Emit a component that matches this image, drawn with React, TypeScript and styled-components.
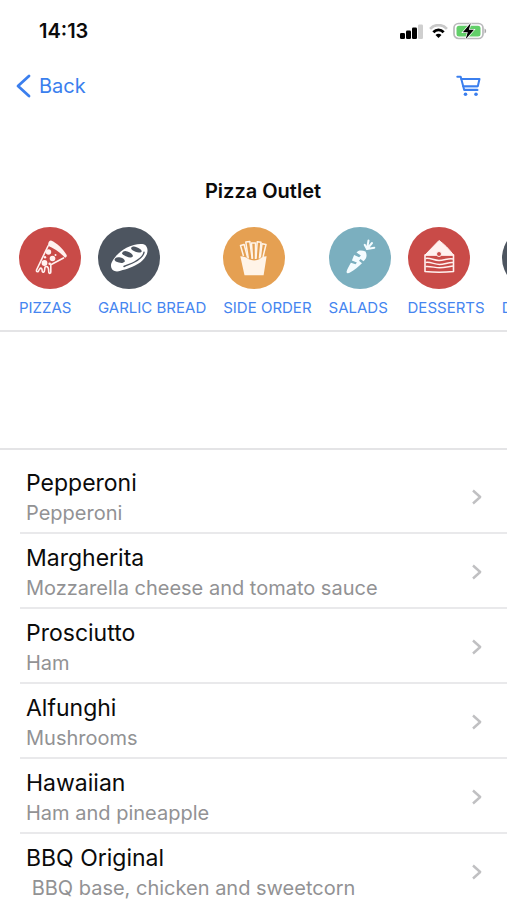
import React from "react";
import styled, { createGlobalStyle } from "styled-components";

const GlobalStyle = createGlobalStyle`
  *, *::before, *::after { box-sizing: border-box; }
  body {
    margin: 0;
    background: #fff;
    color: #0b0b0b;
    font-family: Inter, "Liberation Sans", sans-serif;
  }
`;

const Screen = styled.div`
  display: flex;
  flex-direction: column;
  height: 100vh;
  overflow: hidden;
  background: #fff;
`;

const StatusBar = styled.div`
  display: flex;
  justify-content: space-between;
  align-items: center;
  flex: none;
  height: 62px;
  padding: 0 20px 0 39px;
`;

const Clock = styled.time`
  font-size: 20px;
  line-height: 24px;
  font-weight: 600;
`;

const StatusIcons = styled.div`
  display: flex;
  align-items: center;
  gap: 5px;
  svg { display: block; }
`;

const NavBar = styled.nav`
  display: flex;
  justify-content: space-between;
  align-items: center;
  flex: none;
  height: 48px;
  padding: 0 25px 0 15px;
`;

const NavButton = styled.button`
  display: flex;
  align-items: center;
  gap: 8px;
  padding: 0;
  border: 0;
  background: none;
  color: #3b7fee;
  font: inherit;
  font-size: 20px;
  line-height: 24px;
  cursor: pointer;
  svg { display: block; }
`;

const Header = styled.header`
  flex: none;
  padding-top: 69px;
  border-bottom: 2px solid #e4e4e6;
`;

const Title = styled.h1`
  margin: 0;
  padding-left: 19px;
  text-align: center;
  font-size: 20px;
  line-height: 24px;
  font-weight: 600;
`;

const Categories = styled.div`
  display: flex;
  gap: 17px;
  padding: 24px 19px 12px;
  overflow-x: auto;
  scrollbar-width: none;
`;

const Category = styled.button`
  display: flex;
  flex-direction: column;
  align-items: flex-start;
  flex: none;
  gap: 9px;
  padding: 0;
  border: 0;
  background: none;
  color: #4585f0;
  font: inherit;
  font-size: 15px;
  line-height: 20px;
  white-space: nowrap;
  cursor: pointer;
`;

const Disc = styled.span<{ $color: string }>`
  display: block;
  width: 62px;
  height: 62px;
  border-radius: 50%;
  background: ${({ $color }) => $color};
  svg { display: block; width: 62px; height: 62px; }
`;

const Menu = styled.ul`
  flex: 1;
  min-height: 0;
  margin: 116px 0 0;
  padding: 9px 0 0;
  border-top: 2px solid #e4e4e6;
  list-style: none;
  overflow-y: auto;
  scrollbar-width: none;
`;

const MenuItem = styled.li`
  margin-left: 20px;
  border-bottom: 2px solid #e9e9eb;
`;

const ItemButton = styled.button`
  display: flex;
  align-items: center;
  justify-content: space-between;
  width: 100%;
  padding: 8px 24px 5px 6px;
  border: 0;
  background: none;
  color: inherit;
  font: inherit;
  text-align: left;
  cursor: pointer;
  svg { display: block; flex: none; }
`;

const ItemText = styled.span`
  display: flex;
  flex-direction: column;
`;

const ItemName = styled.span`
  font-size: 23px;
  line-height: 32px;
`;

const ItemDetail = styled.span`
  color: #929294;
  font-size: 20px;
  line-height: 28px;
  white-space: pre;
`;

const Signal = () => (
  <svg width="24" height="15" viewBox="0 0 24 15" aria-hidden="true">
    <rect x="0" y="9" width="5" height="6" rx="1.3" />
    <rect x="6" y="6.500" width="5" height="8.500" rx="1.3" />
    <rect x="12" y="3.500" width="5" height="11.500" rx="1.3" />
    <rect x="18" y="0.500" width="5" height="14.500" rx="1.3" fill="#cfcfcf" />
  </svg>
);

const Wifi = () => (
  <svg width="19" height="15" viewBox="0 0 20 16" fill="none" aria-hidden="true">
    <path d="M1 5.200C6-.2 14-.2 19 5.200" stroke="#c9c9c9" strokeWidth="2.800" />
    <path d="M4.500 8.800c3.200-3.300 7.800-3.300 11 0" stroke="#000" strokeWidth="3" />
    <path d="M6.800 11.800c2-1.700 4.400-1.700 6.400 0L10 15z" fill="#000" />
  </svg>
);

const Battery = () => (
  <svg width="34" height="18" viewBox="0 0 34 18" fill="none" aria-hidden="true">
    <rect x="1" y="1.500" width="29" height="15" rx="4.500" stroke="#b9b9bb" strokeWidth="1.700" />
    <rect x="3.500" y="3.700" width="24" height="10.800" rx="2.500" fill="#62cf69" />
    <path d="M31.500 6.500c2.200.8 2.200 4.200 0 5z" fill="#a9a9ab" />
    <path d="M17.800 1 9.800 10.300h5l-2.200 6.900 8.400-9.400h-5.100z" fill="#000" stroke="#fff" strokeWidth="1.400" paintOrder="stroke" />
  </svg>
);

const BackChevron = () => (
  <svg width="16" height="24" viewBox="0 0 16 24" fill="none" stroke="currentColor" strokeWidth="2.800" strokeLinecap="round" strokeLinejoin="round" aria-hidden="true">
    <path d="M14 2 3 12 14 22" />
  </svg>
);

const Cart = () => (
  <svg width="26" height="22" viewBox="0 0 26 22" fill="none" stroke="currentColor" strokeWidth="2" strokeLinecap="round" strokeLinejoin="round" aria-hidden="true">
    <path d="M7 11.300h14.800L21.500 15H8z" fill="#cfe2ff" stroke="none" />
    <path d="M1.300 1.700H4.700L8.200 15H21.500" />
    <path d="M5.300 4H23.500l-1.700 7.300H7.200" />
    <circle cx="9.500" cy="19.300" r="1.800" fill="currentColor" stroke="none" />
    <circle cx="20" cy="19.300" r="1.800" fill="currentColor" stroke="none" />
  </svg>
);

const Disclosure = () => (
  <svg width="12" height="16" viewBox="0 0 12 16" fill="none" stroke="#c0c0c2" strokeWidth="2.400" strokeLinejoin="round" aria-hidden="true">
    <path d="M2 1.500 9.200 8 2 14.500" />
  </svg>
);

const PizzaIcon = () => (
  <svg viewBox="0 0 62 62" fill="none" aria-hidden="true">
    <path d="M32 13.500c6 2.600 11.800 8 15.500 14.200.8 1.400-.2 2.700-1.500 3-5.200-5.700-10.700-9.300-17-12 .1-2.800 1-5.500 3-5.200z" fill="#fff1ef" />
    <path d="M29.300 18.500 17.500 43c-.3 2.200 1.700 2.300 2.300.4l1.500-2.300c1.500-.2 1.800 1.300 1.900 3.100.6 1.800 2.300 1 2.300-.7l.5-3.300c1.800-1.600 3.300-.2 3.500 1.800l.3 3.500c.4 1.300 2 1 2-.5v-7.300L45 30.800" stroke="#fff1ef" strokeWidth="1.600" strokeLinejoin="round" />
    <circle cx="29.500" cy="25" r="2.700" fill="#fff1ef" />
    <circle cx="33.500" cy="31.500" r="2.800" fill="#fff1ef" />
    <circle cx="25.500" cy="36" r="2.900" fill="#fff1ef" />
    <circle cx="26" cy="30.300" r="1.200" fill="#fff1ef" />
    <circle cx="30.700" cy="36.700" r="1.300" fill="#fff1ef" />
    <circle cx="36.500" cy="28" r="1" fill="#fff1ef" />
  </svg>
);

const BreadIcon = () => (
  <svg viewBox="0 0 62 62" fill="none" aria-hidden="true">
    <path d="M13 38.500c0-4.500 7-13.500 15.500-17.800 7-3.700 16.500-5 19-2.500 4 4.200 2 11.500-5 17-7.500 5.500-14 6.500-20 8.600-5 1.600-9.500 0-9.500-5.300z" fill="#fff" />
    <g fill="#4d5560">
      <path d="M16.500 32.500c1-2 2.500-2.700 5-2.200 2.800.4 5 1.600 5.500 4-1.500 2-3.800 2.100-6.200 1.300-2-.6-4.400-1.600-4.300-3.100z" />
      <path d="M24 26.200c1.200-2.200 3-2.600 5.500-1.600 2.600.9 5.300 2.400 5.500 4.700-1.500 1.900-4.300 1.400-6.400.2-2-1-4.700-1.800-4.600-3.300z" />
      <path d="M33 21c1.500-1.700 3.400-1.700 5.600-.8 2.500 1 5 2.200 5.200 4.200-1.500 1.800-4.300 1.300-6.300.4-2-.9-4.500-2.200-4.500-3.800z" />
    </g>
    <path d="M46 25.300c-.7 3.800-4.500 7-9.500 9.700-3.500 2-7 2.800-10.500 4.500" stroke="#4d5560" strokeWidth="1.400" strokeLinecap="round" />
  </svg>
);

const FriesIcon = () => (
  <svg viewBox="0 0 62 62" fill="none" aria-hidden="true">
    <g stroke="#fff4e8" strokeWidth="1.500" strokeLinejoin="round">
      <path d="m20.500 29-3-10.500 3.600-1 3.500 13" />
      <path d="M25.300 31.500 22.800 15l4-.6 2.400 17.400" />
      <path d="M29.500 31.800 28.500 16h4v16" />
      <path d="M33 31.800 34.200 14.800l3.800.4-1.600 16.300" />
      <path d="m37.300 30.500 1.700-13.800 4 .8-3 12.500" />
    </g>
    <path d="M17.300 29.300c3.400.2 6 .6 8 2.700 3.500 1.900 8.500 1.900 11.500 0 1.800-2 3.500-2.600 6.800-2.700l-3 19H21.500z" fill="#fff4e8" />
  </svg>
);

const CarrotIcon = () => (
  <svg viewBox="0 0 62 62" fill="none" aria-hidden="true">
    <path d="M36.500 24.500c-3.300-1.600-7.500-1.600-9 1l4.400 3-1.800 1.800-5-2.300-2.200 5.500 5 2-1.300 1.700-4.700-1.500c-1.900 3.500-4 6.500-4.400 9.300.3 1.800 2.200 1.500 3.500.6 4.500-2.600 8.500-5.700 12-9.300l-3-2.600 1.500-1.600 3 2.200c2.500-2.300 4.300-5.200 2-9.800z" fill="#f4fcff" />
    <path d="m38 22-2.300-4.200M38 22l1.500-8.500M38 22l7.300-1.300M38 22l5-6" stroke="#f4fcff" strokeWidth="2" strokeLinecap="round" />
  </svg>
);

const CakeIcon = () => (
  <svg viewBox="0 0 62 62" fill="none" aria-hidden="true">
    <path d="M17 28 31 13.500c5 3.500 10 8.500 14.500 14.500z" fill="#fff1ef" stroke="#fff1ef" strokeLinejoin="round" />
    <path d="M17 28v16.500c9 .9 19.500.9 28.500 0V28z" stroke="#fff1ef" strokeWidth="1.600" strokeLinejoin="round" />
    <path d="M17.500 31.500c5-1 8 2 13.500 2s9-2.500 14-1.500M17.500 35.500c5-1 9 2 14 2s9-2.500 13.500-2M17.500 39.500c6-.5 9 1.300 14 1.300s9.500-1.300 14-1.800" stroke="#fff1ef" strokeWidth="1.500" />
    <circle cx="31" cy="27" r="2.500" fill="#c94b48" stroke="#fff1ef" />
  </svg>
);

const DrinkIcon = () => (
  <svg viewBox="0 0 62 62" fill="none" stroke="#fff" strokeWidth="2" strokeLinejoin="round" aria-hidden="true">
    <path d="M22 22h19l-3 26H25zM31 22l2-9h6" />
  </svg>
);

const categories = [
  { label: "PIZZAS", color: "#c94b48", Icon: PizzaIcon },
  { label: "GARLIC BREAD", color: "#4d5560", Icon: BreadIcon },
  { label: "SIDE ORDER", color: "#e5a052", Icon: FriesIcon },
  { label: "SALADS", color: "#7bafbf", Icon: CarrotIcon },
  { label: "DESSERTS", color: "#c94b48", Icon: CakeIcon },
  { label: "DRINKS", color: "#4d5560", Icon: DrinkIcon },
];

const items = [
  { name: "Pepperoni", detail: "Pepperoni" },
  { name: "Margherita", detail: "Mozzarella cheese and tomato sauce" },
  { name: "Prosciutto", detail: "Ham" },
  { name: "Alfunghi", detail: "Mushrooms" },
  { name: "Hawaiian", detail: "Ham and pineapple" },
  { name: "BBQ Original", detail: " BBQ base, chicken and sweetcorn" },
];

export default function App() {
  return (
    <Screen>
      <GlobalStyle />
      <StatusBar>
        <Clock>14:13</Clock>
        <StatusIcons>
          <Signal />
          <Wifi />
          <Battery />
        </StatusIcons>
      </StatusBar>
      <NavBar>
        <NavButton type="button">
          <BackChevron />
          Back
        </NavButton>
        <NavButton type="button" aria-label="Cart">
          <Cart />
        </NavButton>
      </NavBar>
      <Header>
        <Title>Pizza Outlet</Title>
        <Categories>
          {categories.map(({ label, color, Icon }) => (
            <Category type="button" key={label}>
              <Disc $color={color}>
                <Icon />
              </Disc>
              {label}
            </Category>
          ))}
        </Categories>
      </Header>
      <Menu>
        {items.map(({ name, detail }) => (
          <MenuItem key={name}>
            <ItemButton type="button">
              <ItemText>
                <ItemName>{name}</ItemName>
                <ItemDetail>{detail}</ItemDetail>
              </ItemText>
              <Disclosure />
            </ItemButton>
          </MenuItem>
        ))}
      </Menu>
    </Screen>
  );
}
